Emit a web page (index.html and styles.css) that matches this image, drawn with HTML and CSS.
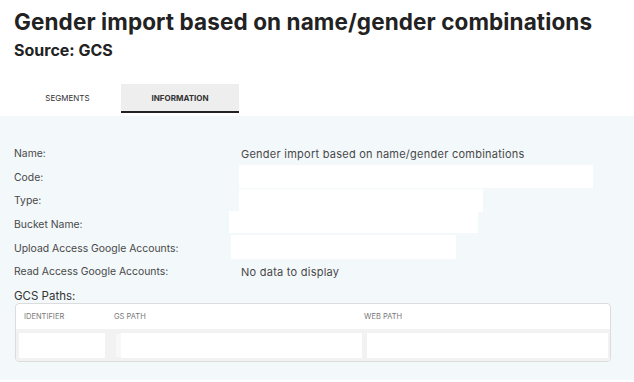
FILE: index.html
```html
<!DOCTYPE html>
<html lang="en">
<head>
    <meta charset="UTF-8">
    <meta name="viewport" content="width=device-width, initial-scale=1.0">
    <title>Gender import based on name/gender combinations</title>
    <link rel="stylesheet" href="styles.css">
</head>
<body>
    <div class="page-header">
        <h1>Gender import based on name/gender combinations</h1>
        <h2>Source: GCS</h2>
    </div>

    <div class="tabs">
        <div class="tab">Segments</div>
        <div class="tab active">Information</div>
    </div>

    <div class="panel">
        <div class="info-grid">
            <div class="info-label">Name:</div>
            <div class="info-value">Gender import based on name/gender combinations</div>

            <div class="info-label">Code:</div>
            <div class="info-value"><span class="blank blank-code"></span></div>

            <div class="info-label">Type:</div>
            <div class="info-value"><span class="blank blank-type"></span></div>

            <div class="info-label">Bucket Name:</div>
            <div class="info-value"><span class="blank blank-bucket"></span></div>

            <div class="info-label">Upload Access Google Accounts:</div>
            <div class="info-value"><span class="blank blank-upload"></span></div>

            <div class="info-label">Read Access Google Accounts:</div>
            <div class="info-value">No data to display</div>
        </div>

        <div class="section-title">GCS Paths:</div>
        <div class="paths-table">
            <div class="paths-head">
                <div>Identifier</div>
                <div>GS Path</div>
                <div>Web Path</div>
            </div>
            <div class="paths-row">
                <div class="cell"></div>
                <div class="cell cell-path"></div>
                <div class="cell"></div>
            </div>
        </div>
    </div>
</body>
</html>
```

FILE: styles.css
```css
body {
    margin: 0;
    font-family: Inter, "Noto Sans", sans-serif;
    background-color: #fff;
    color: #222;
}

.page-header {
    padding: 9px 14px 0;
}
h1 {
    font-size: 22.5px;
    font-weight: 700;
    letter-spacing: 0.1px;
    margin: 0;
    line-height: 26px;
}
h2 {
    font-size: 16px;
    font-weight: 700;
    margin: 6px 0 0;
    line-height: 19px;
}

.tabs {
    display: flex;
    padding-left: 14px;
    margin-top: 24px;
    margin-bottom: 3px;
}
.tab {
    width: 107px;
    height: 27px;
    line-height: 29px;
    text-align: center;
    font-size: 8px;
    text-transform: uppercase;
    color: #333;
    border-bottom: 2px solid transparent;
}
.tab.active {
    width: 118px;
    background-color: #eeeeee;
    border-bottom-color: #222;
    font-weight: 700;
}

.panel {
    background-color: #f3f8fb;
    padding: 26px 14px 18px;
}

.info-grid {
    display: grid;
    grid-template-columns: 227px 1fr;
    grid-auto-rows: 23.6px;
    align-items: center;
    font-size: 10.4px;
    color: #484848;
}
.info-value {
    position: relative;
    height: 100%;
    display: flex;
    align-items: center;
    font-size: 11px;
    letter-spacing: 0.25px;
}
.blank {
    position: absolute;
    background-color: #fff;
    height: 23px;
}
.blank-code { left: -2px; top: -1px; width: 354px; }
.blank-type { left: -2px; top: 0px; width: 244px; }
.blank-bucket { left: -12px; top: -2px; width: 249px; height: 22px; }
.blank-upload { left: -10px; top: -1px; width: 225px; height: 24px; }

.section-title {
    font-size: 11.5px;
    color: #333;
    margin-top: 5px;
    line-height: 14px;
}

.paths-table {
    margin-left: 1px;
    width: 594px;
    background-color: #fff;
    border: 1px solid #dcdcdc;
    border-radius: 4px;
    overflow: hidden;
}
.paths-head {
    display: grid;
    grid-template-columns: 90px 250px 1fr;
    height: 25px;
    align-items: center;
    padding-left: 8px;
    font-size: 7.5px;
    text-transform: uppercase;
    color: #777;
}
.paths-row {
    display: grid;
    grid-template-columns: 86px 252px 241px;
    column-gap: 5px;
    background-color: #f2f2f2;
    padding: 4px 0 3px 3px;
}
.cell {
    background-color: #fff;
    height: 25px;
}
.cell-path {
    margin-left: 11px;
    box-shadow: -6px 0 0 -1px #f8f8f8;
}
```
